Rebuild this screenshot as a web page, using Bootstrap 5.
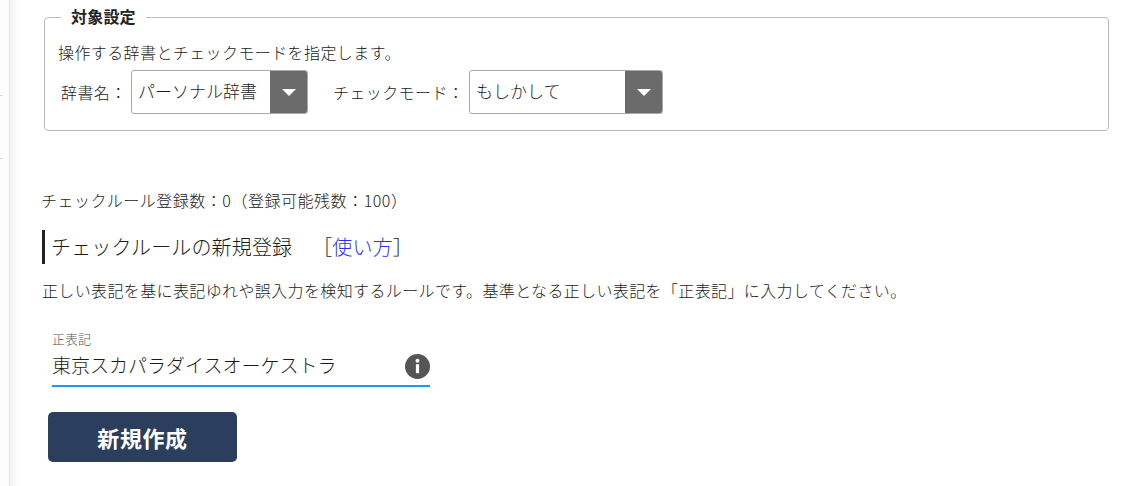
<!DOCTYPE html>
<html lang="ja">
<head>
<meta charset="utf-8">
<title>チェックルール</title>
<link href="https://cdn.jsdelivr.net/npm/bootstrap@5.3.0/dist/css/bootstrap.min.css" rel="stylesheet">
<style>
html,body{height:486px;overflow:hidden;background:#fff}
body{font-family:"Noto Sans CJK JP","Noto Sans",sans-serif;color:#1c1c1c;font-size:16px;font-weight:300}
.shell{height:486px}
.rail-edge{width:9px;flex:none;background:#fdfdfd}
.tick{width:3px;height:1px;background:#ddd}
.tick-a{margin-top:95px}.tick-b{margin-top:62px}
.rail{width:11px;flex:none;border-left:1px solid #e6e6e6;background:linear-gradient(to right,#f3f3f3,#fff)}
.main-col{padding:8px 24px 0 22px}
.fs-box{border:1px solid #bbb;border-radius:4px;height:114px;margin:9px 0 0 2px;padding:23px 13px 0 13px;position:relative}
.fs-title{position:absolute;left:16px;top:-13px;background:#fff;padding:0 10px;font-size:16px;font-weight:700;line-height:22px;color:#222;letter-spacing:.2px}
.intro{line-height:22px;letter-spacing:.4px;white-space:nowrap}
.pick-row{margin-top:7px}
.pick-label{line-height:44px;padding:0 0 0 3px;width:73px;letter-spacing:.4px;white-space:nowrap}
.pick-label-b{padding-left:25px;width:161px}
.pick{border:1px solid #aaa;border-radius:3px;height:44px;background:#fff;overflow:hidden;font-size:17px}
.pick-a{width:177px}.pick-b{width:194px}
.pick-text{padding-left:6px;line-height:40px;flex:1;white-space:nowrap;color:#1c1c1c}
.pick-arrow{width:37px;background:#6b6b6b;flex:none}
.tri{width:0;height:0;border-left:7px solid transparent;border-right:7px solid transparent;border-top:7px solid #fff}
.count{margin:58px 0 0 -1px;line-height:22px;letter-spacing:.53px;white-space:nowrap}
.head-bar{border-left:3px solid #222;height:34px;margin-top:19px;padding-left:6px;font-size:20px;line-height:34px;letter-spacing:.15px;white-space:nowrap}
.howto{margin-left:20px}
.howto a{color:#2f2ff0;text-decoration:none}
.desc{margin-top:15px;line-height:22px;letter-spacing:.37px;white-space:nowrap}
.field{width:378px;margin:30px 0 0 10px;border-bottom:2px solid #2196f3;height:56px}
.field-label{font-size:13px;line-height:16px;color:#555}
.field-row{height:36px}
.field-value{font-size:19px;line-height:36px;white-space:nowrap}
.info-ic{width:25px;height:25px;flex:none;margin-top:2px}
.make-btn{width:189px;height:50px;background:#2c3e5d;color:#fff;font-size:22px;font-weight:700;border:0;border-radius:5px;margin:25px 0 0 6px;line-height:1;letter-spacing:.6px}
.make-btn:hover{background:#2c3e5d;color:#fff}
</style>
</head>
<body>
<div class="shell d-flex">
  <div class="rail-edge"><div class="tick tick-a"></div><div class="tick tick-b"></div></div>
  <div class="rail"></div>
  <div class="main-col flex-grow-1">
    <div class="fs-box">
      <div class="fs-title">対象設定</div>
      <div class="intro">操作する辞書とチェックモードを指定します。</div>
      <div class="pick-row d-flex align-items-center">
        <span class="pick-label">辞書名：</span>
        <div class="pick pick-a d-flex">
          <span class="pick-text">パーソナル辞書</span>
          <span class="pick-arrow d-flex align-items-center justify-content-center"><span class="tri"></span></span>
        </div>
        <span class="pick-label pick-label-b">チェックモード：</span>
        <div class="pick pick-b d-flex">
          <span class="pick-text">もしかして</span>
          <span class="pick-arrow d-flex align-items-center justify-content-center"><span class="tri"></span></span>
        </div>
      </div>
    </div>
    <div class="count">チェックルール登録数：0（登録可能残数：100）</div>
    <div class="head-bar">チェックルールの新規登録<span class="howto">［<a href="#">使い方</a>］</span></div>
    <div class="desc">正しい表記を基に表記ゆれや誤入力を検知するルールです。基準となる正しい表記を「正表記」に入力してください。</div>
    <div class="field">
      <div class="field-label">正表記</div>
      <div class="field-row d-flex align-items-center justify-content-between">
        <span class="field-value">東京スカパラダイスオーケストラ</span>
        <svg class="info-ic" viewBox="0 0 25 25" aria-hidden="true"><circle cx="12.5" cy="12.5" r="12.5" fill="#555"/><circle cx="12.5" cy="6.8" r="2" fill="#fff"/><rect x="10.9" y="10.2" width="3.2" height="9" fill="#fff"/></svg>
      </div>
    </div>
    <button type="button" class="btn make-btn d-block">新規作成</button>
  </div>
</div>
<script src="https://cdn.jsdelivr.net/npm/bootstrap@5.3.0/dist/js/bootstrap.bundle.min.js"></script>
</body>
</html>
